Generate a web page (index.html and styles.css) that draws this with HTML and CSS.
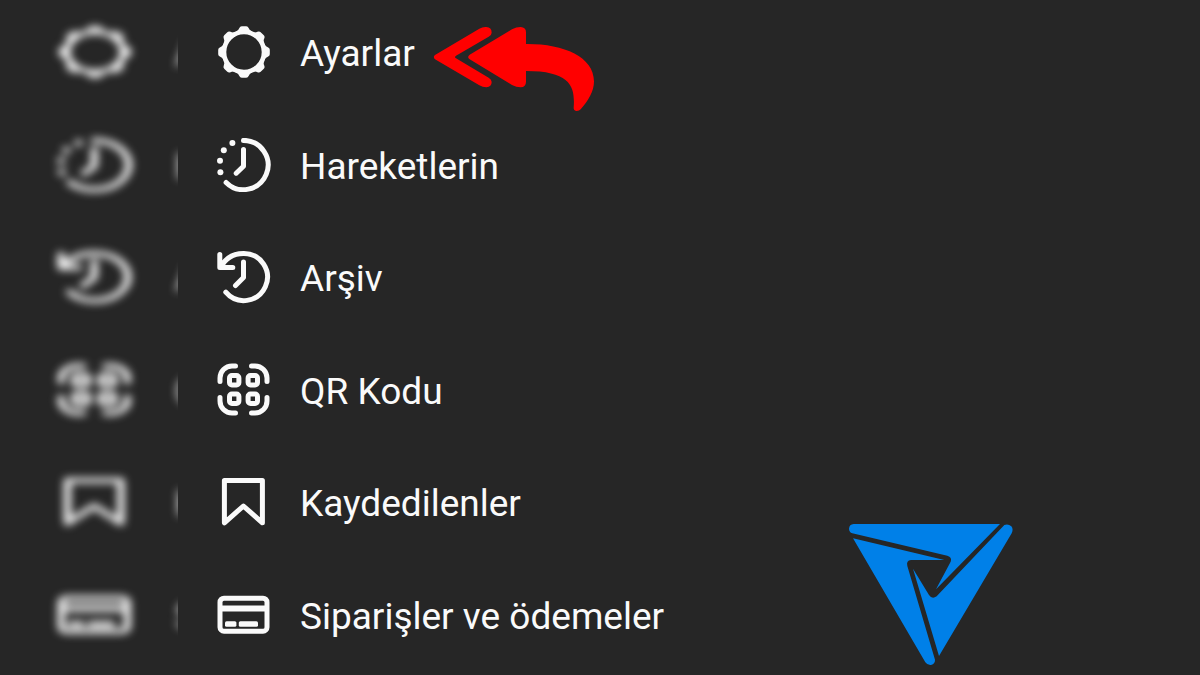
FILE: index.html
```html
<!DOCTYPE html>
<html lang="tr">
<head>
    <meta charset="UTF-8">
    <meta name="viewport" content="width=device-width, initial-scale=1.0">
    <title>Menü</title>
    <link rel="stylesheet" href="styles.css">
</head>
<body>
    <svg class="icon-defs" aria-hidden="true">
        <symbol id="ayarlar" viewBox="0 0 54 54" preserveAspectRatio="none">
            <circle cx="27" cy="27" r="20" fill="none" stroke="currentColor" stroke-width="4.6"/>
            <g fill="currentColor">
                <path id="dis" d="M19 6.6Q21.4 5.6 22.2 3.2Q23 1.2 24.8 1.2H29.2Q31 1.2 31.8 3.2Q32.6 5.6 35 6.6L33 8.5H21Z"/>
                <use href="#dis" transform="rotate(45 27 27)"/>
                <use href="#dis" transform="rotate(90 27 27)"/>
                <use href="#dis" transform="rotate(135 27 27)"/>
                <use href="#dis" transform="rotate(180 27 27)"/>
                <use href="#dis" transform="rotate(225 27 27)"/>
                <use href="#dis" transform="rotate(270 27 27)"/>
                <use href="#dis" transform="rotate(315 27 27)"/>
            </g>
        </symbol>
        <symbol id="hareketler" viewBox="0 0 54 54" preserveAspectRatio="none">
            <path class="line" d="M26.5 2.4A24.6 24.6 0 1 1 9.1 44.4M26.5 11.5V28.2L19.2 35.2"/>
            <g fill="currentColor">
                <circle cx="15.4" cy="5" r="3"/>
                <circle cx="6.8" cy="12.2" r="3"/>
                <circle cx="3" cy="22.8" r="3"/>
                <circle cx="3.4" cy="34.3" r="3"/>
            </g>
        </symbol>
        <symbol id="arsiv" viewBox="0 0 54 54" preserveAspectRatio="none">
            <path class="line" d="M3.6 17.4C8 9 16 3.4 26.5 3.4A23.6 23.6 0 1 1 8.8 42.2M2.8 4.5V17.4H15.8M26.5 12V27.6L18.5 35.6"/>
        </symbol>
        <symbol id="qr" viewBox="0 0 54 54" preserveAspectRatio="none">
            <path class="line" d="M3 18.5V15A12 12 0 0 1 15 3H18.500M34.5 3H38A12 12 0 0 1 50 15V18.5M50 34.5V38A12 12 0 0 1 38 50H34.5M18.5 50H15A12 12 0 0 1 3 38V34.5"/>
            <g class="line">
                <rect x="12.5" y="12.5" width="9.4" height="9.4" rx="2.4"/>
                <rect x="31.1" y="12.5" width="9.4" height="9.4" rx="2.4"/>
                <rect x="12.5" y="31.1" width="9.4" height="9.4" rx="2.4"/>
                <rect x="31.1" y="31.1" width="9.4" height="9.4" rx="2.4"/>
            </g>
        </symbol>
        <symbol id="kaydet" viewBox="0 0 54 54" preserveAspectRatio="none">
            <path class="line" d="M7.4 5.4H45.4V47.8L26.4 31L7.4 47.8Z"/>
        </symbol>
        <symbol id="kart" viewBox="0 0 54 54" preserveAspectRatio="none">
            <rect class="line" x="3" y="10.2" width="47" height="33" rx="4"/>
            <path fill="currentColor" d="M3 17.6H50V23.6H3Z"/>
            <rect fill="currentColor" x="8" y="33.2" width="11.4" height="5.6" rx="1.6"/>
            <rect fill="currentColor" x="21.8" y="33.2" width="19.2" height="5.6" rx="1.6"/>
        </symbol>
    </svg>

    <main class="screen">
        <!-- bulanık kenar -->
        <div class="blur-strip" aria-hidden="true">
            <div class="blur-row"><svg><use href="#ayarlar"/></svg><span>A</span></div>
            <div class="blur-row"><svg><use href="#hareketler"/></svg><span>H</span></div>
            <div class="blur-row"><svg><use href="#arsiv"/></svg><span>A</span></div>
            <div class="blur-row"><svg><use href="#qr"/></svg><span>Q</span></div>
            <div class="blur-row"><svg><use href="#kaydet"/></svg><span>K</span></div>
            <div class="blur-row"><svg><use href="#kart"/></svg><span>S</span></div>
        </div>

        <nav class="menu">
            <a href="#"><svg class="icon"><use href="#ayarlar"/></svg><span>Ayarlar</span></a>
            <a href="#"><svg class="icon"><use href="#hareketler"/></svg><span>Hareketlerin</span></a>
            <a href="#"><svg class="icon"><use href="#arsiv"/></svg><span>Arşiv</span></a>
            <a href="#"><svg class="icon"><use href="#qr"/></svg><span>QR Kodu</span></a>
            <a href="#"><svg class="icon"><use href="#kaydet"/></svg><span>Kaydedilenler</span></a>
            <a href="#"><svg class="icon"><use href="#kart"/></svg><span>Siparişler ve ödemeler</span></a>
        </nav>

        <svg class="arrow" viewBox="0 0 570 330" aria-hidden="true">
            <path d="M45 135L178 56Q188 50 199 51Q215 52 215 68Q215 75 206 80L108 137Q102 141 108 145L206 203Q215 208 215 216Q215 231 199 232Q188 232 178 226L45 148Q38 141 45 135Z"/>
            <path d="M149 134L276 58Q289 51 302 51Q318 52 318 67V102C430 101 522 140 522 214C522 245 505 272 482 298Q477 304 468 303Q460 301 461 293C465 235 458 183 318 183V215Q318 231 302 232Q289 232 276 225L149 148Q140 141 149 134Z"/>
        </svg>

        <svg class="logo" viewBox="0 0 570 495" aria-hidden="true">
            <path d="M56 42H495L303 238L347 155Q352 141 337 137L52 70Q42 66 42 56Q43 43 56 42Z"/>
            <path d="M54 85L328 150H228Q213 152 217 168L300 449Q301 461 288 465Q277 466 271 457Z"/>
            <path d="M508 45Q520 41 529 49Q536 58 530 70L312 438L234 176L282 255Q291 269 305 259Z"/>
        </svg>
    </main>
</body>
</html>
```
FILE: styles.css
```css
* {
    box-sizing: border-box;
}

body {
    margin: 0;
    background-color: #262626;
    color: #fafafa;
    font-family: Roboto, "Noto Sans", sans-serif;
    font-size: 37px;
    line-height: 44px;
}

.icon-defs {
    position: absolute;
    width: 0;
    height: 0;
}

.line {
    fill: none;
    stroke: currentColor;
    stroke-width: 5;
    stroke-linecap: round;
    stroke-linejoin: round;
}

.screen {
    position: relative;
    display: flex;
    min-height: 100vh;
    overflow: hidden;
}

.blur-strip,
.menu {
    display: grid;
    grid-template-rows: repeat(6, 1fr);
}

.blur-strip {
    width: 178px;
    flex-shrink: 0;
    overflow: hidden;
}

.blur-row,
.menu a {
    display: flex;
    align-items: center;
    padding-bottom: 8px;
    white-space: nowrap;
}

.blur-row {
    gap: 42px;
    padding-left: 57px;
    filter: blur(4px);
}

.blur-row svg {
    width: 76px;
    height: 54px;
    flex-shrink: 0;
}

.menu {
    flex: 1;
    padding-left: 39px;
}

.menu a {
    gap: 29px;
    color: inherit;
    text-decoration: none;
}

.icon {
    width: 54px;
    height: 54px;
    flex-shrink: 0;
}

.menu span,
.blur-row span {
    padding-top: 4px;
}

/* Ayarlar satırını gösteren ok */
.arrow {
    position: absolute;
    top: 10px;
    left: 420px;
    width: 190px;
    height: 110px;
    fill: #ff0000;
}

.logo {
    position: absolute;
    right: 175px;
    bottom: 0;
    width: 190px;
    height: 165px;
    fill: #0080e8;
}
```
